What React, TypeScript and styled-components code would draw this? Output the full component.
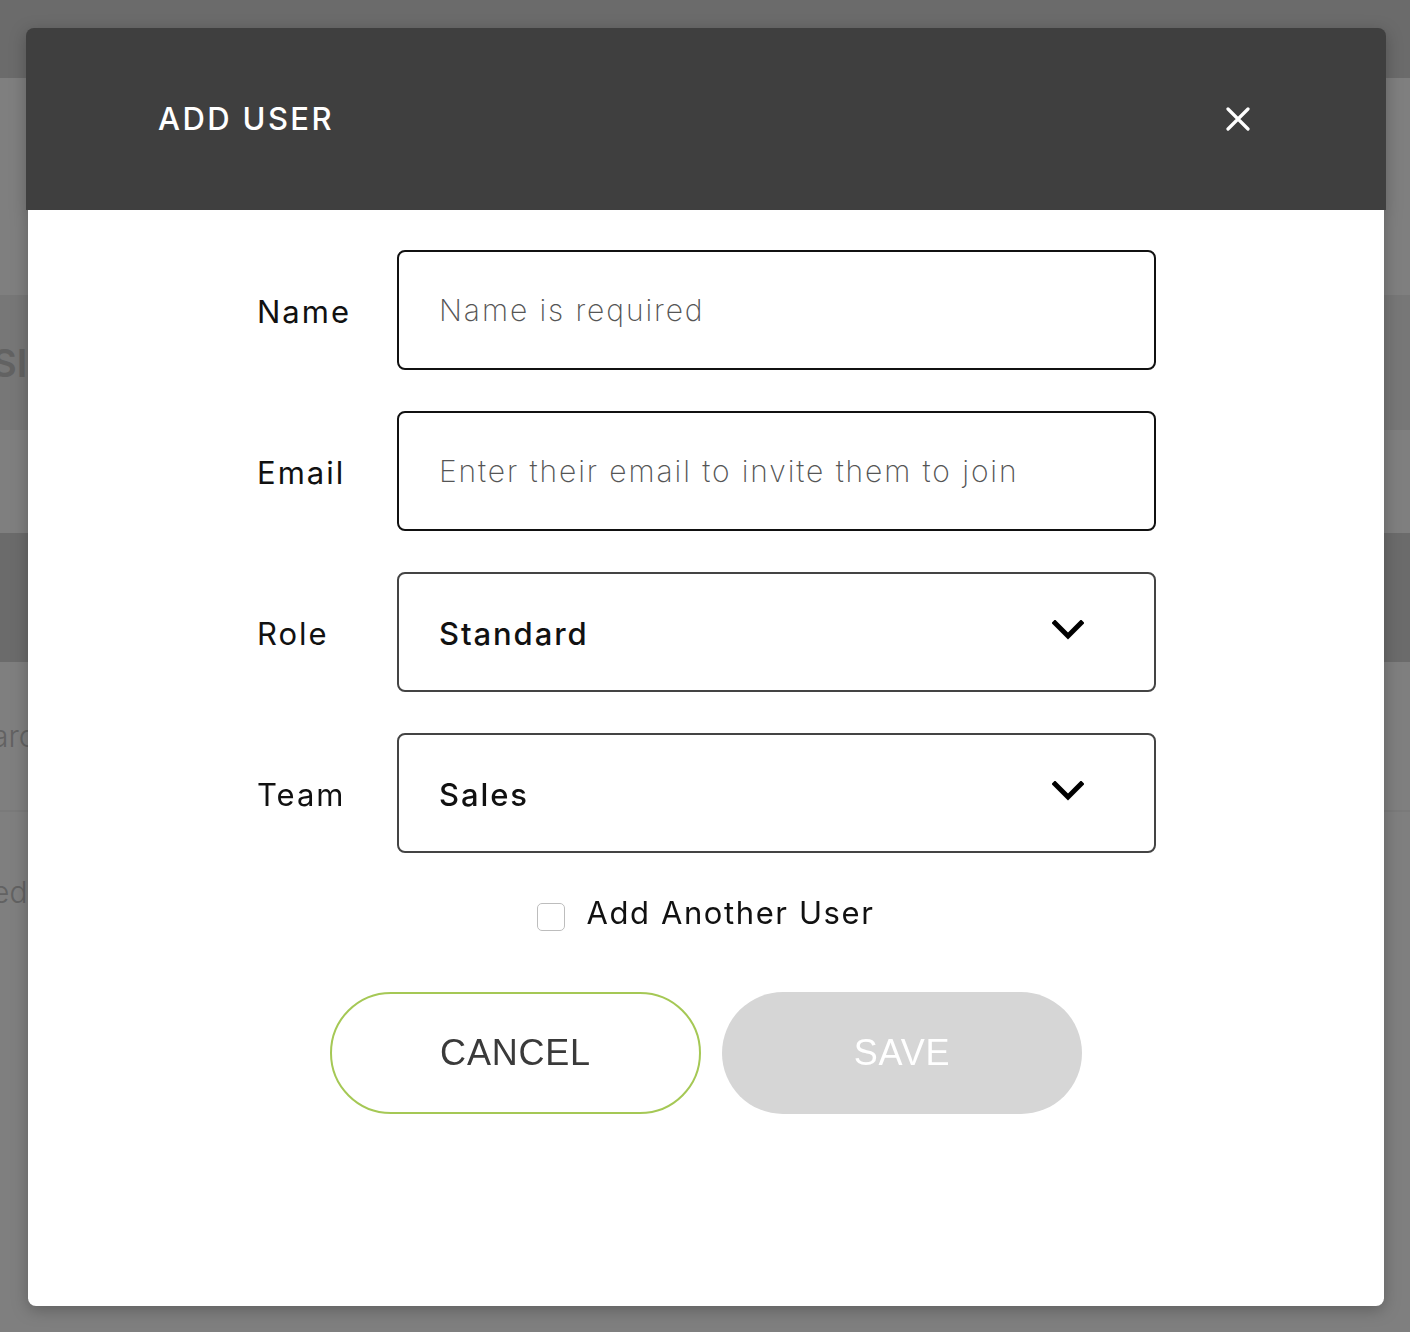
import React from 'react'
import styled, { createGlobalStyle } from 'styled-components';

const GlobalStyle = createGlobalStyle`
    html, body {
        margin: 0;
        padding: 0;
        background: #7f7f7f;
    }
    * {
        box-sizing: border-box;
    }
`;

// dimmed page that sits behind the dialog
const Page = styled.div`
    position: relative;
    width: 1410px;
    height: 1332px;
    overflow: hidden;
    background: #7f7f7f;
    font-family: Inter, "Noto Sans", sans-serif;
`;
const Band = styled.div<{ $h: number; $bg?: string }>`
    height: ${p => p.$h}px;
    background: ${p => p.$bg || '#7f7f7f'};
    display: flex;
    align-items: center;
    overflow: hidden;
    white-space: nowrap;
`;
const BandText = styled.span<{ $size: number; $weight?: number }>`
    font-size: ${p => p.$size}px;
    font-weight: ${p => p.$weight || 400};
    color: #626262;
    margin-left: -8px;
`;

const Overlay = styled.div`
    position: absolute;
    top: 28px;
    left: 26px;
    width: 1360px;
    display: flex;
    flex-direction: column;
    align-items: center;
    filter: drop-shadow(0 4px 8px rgba(0, 0, 0, 0.25));
`;
const Header = styled.div`
    width: 1360px;
    height: 182px;
    background: #3f3f3f;
    border-radius: 8px 8px 0 0;
    display: flex;
    align-items: center;
    justify-content: space-between;
    padding: 0 136px 0 132px;
`;
const Title = styled.div`
    color: #ffffff;
    font-size: 31px;
    font-weight: 500;
    letter-spacing: 2.4px;
    padding-bottom: 2px;
`;
const CloseButton = styled.div`
    width: 24px;
    height: 24px;
    display: flex;
    cursor: pointer;
`;
const Body = styled.div`
    width: 1356px;
    height: 1096px;
    background: #ffffff;
    border-radius: 0 0 8px 8px;
    padding: 40px 0 0 229px;
    display: flex;
    flex-direction: column;
`;
const FieldRow = styled.div`
    display: flex;
    align-items: center;
    margin-bottom: 41px;
`;
const Label = styled.div`
    width: 140px;
    font-size: 31px;
    letter-spacing: 2px;
    color: #111;
    padding-top: 2px;
`;
const TextBox = styled.div`
    width: 759px;
    height: 120px;
    border: 2px solid #111;
    border-radius: 8px;
    display: flex;
    align-items: center;
    padding: 0 40px;
`;
const Placeholder = styled.span`
    font-size: 30px;
    font-weight: 200;
    color: #555;
    letter-spacing: 1.9px;
`;
const SelectBox = styled(TextBox)`
    border-color: #444;
    justify-content: space-between;
    padding: 0 70px 0 40px;
`;
const SelectValue = styled.span`
    font-size: 31px;
    font-weight: 500;
    color: #111;
    letter-spacing: 1.9px;
    padding-top: 2px;
`;
const CheckRow = styled.label`
    display: flex;
    align-items: center;
    gap: 21px;
    margin: -2px 0 0 -229px;
    width: 1356px;
    justify-content: center;
    height: 40px;
`;
const Box = styled.span`
    width: 28px;
    height: 28px;
    border: 1.5px solid #bdbdbd;
    border-radius: 5px;
    margin-top: 10px;
`;
const CheckText = styled.span`
    font-size: 31px;
    letter-spacing: 1.6px;
    color: #111;
`;
const Actions = styled.div`
    display: flex;
    justify-content: center;
    gap: 21px;
    margin: 60px 0 0 -229px;
    width: 1356px;
`;
const Button = styled.div<{ $primary?: boolean }>`
    width: ${p => (p.$primary ? 360 : 371)}px;
    height: 122px;
    border-radius: 62px;
    display: flex;
    align-items: center;
    justify-content: center;
    font-family: "Liberation Sans", Arial, sans-serif;
    font-size: 36px;
    letter-spacing: 0.8px;
    text-transform: uppercase;
    background: ${p => (p.$primary ? '#d6d6d6' : '#ffffff')};
    border: ${p => (p.$primary ? 'none' : '2px solid #a5c855')};
    color: ${p => (p.$primary ? '#ffffff' : '#3a3a3a')};
`;

const Chevron = () => (
    <svg width="32" height="20" viewBox="0 0 32 20" style={{ marginTop: -4 }}>
        <polyline points="3,3 16,16 29,3" fill="none" stroke="#000" strokeWidth="5" strokeLinecap="square" />
    </svg>
);

const fields = [
    { label: 'Name', placeholder: 'Name is required' },
    { label: 'Email', placeholder: 'Enter their email to invite them to join' },
];
const selects = [
    { label: 'Role', value: 'Standard' },
    { label: 'Team', value: 'Sales' },
];

const App = () => {
    return (
        <>
            <GlobalStyle />
            <Page>
                <Band $h={78} $bg="#6b6b6b" />
                <Band $h={217} />
                <Band $h={135} $bg="#777777">
                    <BandText $size={38} $weight={600}>SI</BandText>
                </Band>
                <Band $h={103} />
                <Band $h={129} $bg="#6b6b6b" />
                <Band $h={148}>
                    <BandText $size={30} $weight={300}>arc</BandText>
                </Band>
                <Band $h={2} $bg="#7a7a7a" />
                <Band $h={160}>
                    <BandText $size={30} $weight={300}>ed</BandText>
                </Band>

                <Overlay>
                    <Header>
                        <Title>ADD USER</Title>
                        <CloseButton>
                            <svg width="24" height="24" viewBox="0 0 24 24">
                                <path d="M2 2L22 22M22 2L2 22" stroke="#fff" strokeWidth="3.2" strokeLinecap="round" />
                            </svg>
                        </CloseButton>
                    </Header>
                    <Body>
                        {fields.map(f => (
                            <FieldRow key={f.label}>
                                <Label>{f.label}</Label>
                                <TextBox>
                                    <Placeholder>{f.placeholder}</Placeholder>
                                </TextBox>
                            </FieldRow>
                        ))}
                        {selects.map(s => (
                            <FieldRow key={s.label}>
                                <Label>{s.label}</Label>
                                <SelectBox>
                                    <SelectValue>{s.value}</SelectValue>
                                    <Chevron />
                                </SelectBox>
                            </FieldRow>
                        ))}
                        <CheckRow>
                            <Box />
                            <CheckText>Add Another User</CheckText>
                        </CheckRow>
                        <Actions>
                            <Button>Cancel</Button>
                            <Button $primary>Save</Button>
                        </Actions>
                    </Body>
                </Overlay>
            </Page>
        </>
    );
}

export default App;
